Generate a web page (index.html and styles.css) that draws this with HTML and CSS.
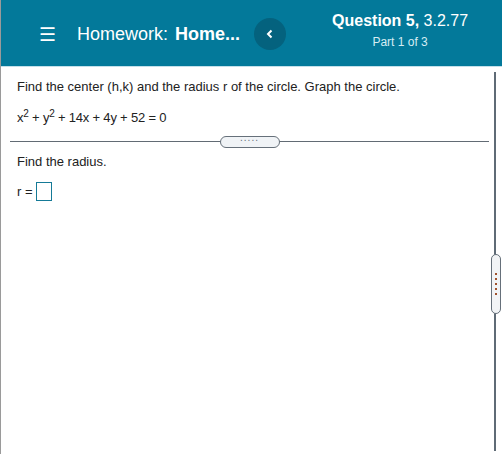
FILE: index.html
```html
<!DOCTYPE html>
<html lang="en">
<head>
    <meta charset="UTF-8">
    <title>Homework: Homework</title>
    <link rel="stylesheet" href="styles.css">
</head>
<body>
    <div class="app">
        <header class="topbar">
            <div class="menu-icon">&#9776;</div>
            <div class="hw-title">Homework: <b>Home...</b></div>
            <div class="back-btn">
                <svg width="10" height="10" viewBox="0 0 10 10"><path d="M6.5 1.5 L3 5 L6.5 8.5" fill="none" stroke="#fff" stroke-width="2"/></svg>
            </div>
            <div class="q-info">
                <div class="q-num"><b>Question 5,</b> 3.2.77</div>
                <div class="q-part">Part 1 of 3</div>
            </div>
        </header>

        <div class="main">
            <div class="content">
                <div class="problem">
                    <p>Find the center (h,k) and the radius r of the circle. Graph the circle.</p>
                    <p class="eq">x<sup>2</sup> + y<sup>2</sup> + 14x + 4y + 52 = 0</p>
                </div>
                <div class="hsplit">
                    <span class="pill">.....</span>
                </div>
                <div class="answer">
                    <p>Find the radius.</p>
                    <p class="ans-row">r = <span class="ans-box"></span></p>
                </div>
            </div>
            <div class="vsplit">
                <span class="vpill"><i></i><i></i><i></i><i></i><i></i></span>
            </div>
        </div>
    </div>
</body>
</html>
```

FILE: styles.css
```css
* {
    box-sizing: border-box;
    margin: 0;
    padding: 0;
}
body {
    font-family: "Liberation Sans", Arial, sans-serif;
    color: #222;
    background: #fff;
    width: 502px;
    height: 454px;
    overflow: hidden;
}
.app {
    height: 454px;
    border-left: 1px solid #9a9a9a;
    display: flex;
    flex-direction: column;
}
.topbar {
    height: 67px;
    background: #03799a;
    border-bottom: 1px solid #c4e0ea;
    display: flex;
    align-items: center;
    color: #fff;
    flex-shrink: 0;
}
.menu-icon {
    margin-left: 38px;
    font-size: 19px;
    width: 20px;
    margin-top: 2px;
}
.hw-title {
    margin-left: 18px;
    font-size: 18px;
    margin-top: 2px;
}
.hw-title b {
    margin-left: 2px;
}
.back-btn {
    width: 32px;
    height: 32px;
    border-radius: 50%;
    background: #04627e;
    margin-left: 14px;
    margin-top: 2px;
    display: flex;
    align-items: center;
    justify-content: center;
}
.q-info {
    margin-left: 46px;
    text-align: center;
    margin-top: -6px;
}
.q-num {
    font-size: 16px;
}
.q-part {
    font-size: 12px;
    color: #d6ecf3;
    margin-top: 5px;
}
.main {
    flex: 1;
    display: flex;
}
.content {
    flex: 1;
    padding-left: 9px;
    display: flex;
    flex-direction: column;
}
.problem {
    padding: 12px 0 0 7px;
    font-size: 13px;
}
.problem .eq {
    margin-top: 16px;
    font-size: 13px;
    letter-spacing: -0.2px;
}
sup {
    font-size: 10px;
    line-height: 0;
}
.hsplit {
    margin-top: 11px;
    height: 12px;
    display: flex;
    align-items: center;
    justify-content: center;
    position: relative;
    margin-right: 4px;
}
.hsplit::before {
    content: "";
    position: absolute;
    left: 0;
    right: 0;
    top: 5px;
    border-top: 1px solid #626b74;
}
.pill {
    position: relative;
    width: 60px;
    height: 12px;
    border: 1px solid #66707a;
    border-radius: 6px;
    background: #f0f3f6;
    color: #66707a;
    font-size: 10px;
    line-height: 2px;
    text-align: center;
    letter-spacing: 1px;
}
.answer {
    padding: 6px 0 0 7px;
    font-size: 13px;
}
.ans-row {
    margin-top: 13px;
    display: flex;
    align-items: center;
    gap: 3px;
}
.ans-box {
    display: inline-block;
    width: 16px;
    height: 19px;
    border: 1px solid #157a97;
}
.vsplit {
    width: 8px;
    margin-right: 1px;
    margin-top: 5px;
    margin-bottom: 3px;
    position: relative;
    display: flex;
    align-items: center;
    justify-content: center;
}
.vsplit::before {
    content: "";
    position: absolute;
    top: 0;
    bottom: 0;
    left: 1px;
    border-left: 2px solid #5f6b76;
}
.vpill {
    position: relative;
    width: 10px;
    height: 60px;
    margin-left: -3px;
    margin-top: 44px;
    border: 1px solid #66707a;
    border-radius: 5px;
    background: #f2f4f6;
    display: flex;
    flex-direction: column;
    align-items: center;
    justify-content: center;
    gap: 3px;
}
.vpill i {
    display: block;
    width: 2px;
    height: 2px;
    background: #a0522d;
}
```
